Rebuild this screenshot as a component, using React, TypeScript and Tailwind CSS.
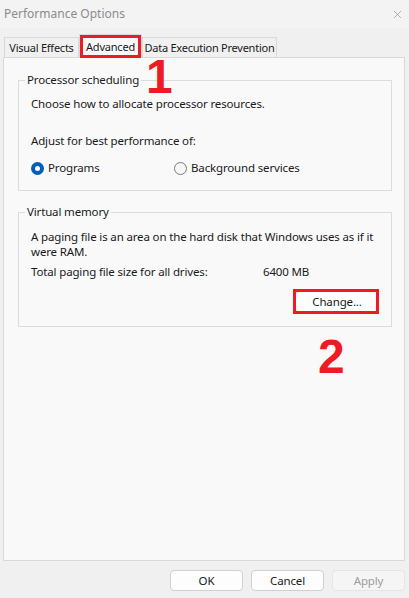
import { X } from 'lucide-react';

const font = { fontFamily: '"Noto Sans", "Open Sans", sans-serif' };

function Tab({ label, active, width }: { label: string; active?: boolean; width: string }) {
    if (active) {
        return (
            <div className={`relative -mb-px flex h-[24px] ${width} items-center justify-center whitespace-nowrap border border-b-0 border-[#d9d9d9] bg-[#f9f9f9] text-[11px] tracking-[-0.2px] text-[#1a1a1a]`}>
                {label}
                {/* marco rojo de la captura */}
                <span className="pointer-events-none absolute inset-0 border-[3px] border-[#ed1c24]" />
            </div>
        );
    }
    return (
        <div className={`flex h-[20px] ${width} items-center justify-center whitespace-nowrap border border-b-0 border-[#d9d9d9] bg-[#f0f0f0] text-[11px] tracking-[-0.25px] text-[#1a1a1a]`}>
            {label}
        </div>
    );
}

function Radio({ checked, label }: { checked?: boolean; label: string }) {
    return (
        <label className="flex items-center gap-[4px]">
            {checked ? (
                <span className="flex h-[13px] w-[13px] items-center justify-center rounded-full bg-[#005fb8]">
                    <span className="h-[5px] w-[5px] rounded-full bg-white" />
                </span>
            ) : (
                <span className="h-[13px] w-[13px] rounded-full border border-[#7a7a7a] bg-[#f7f7f7]" />
            )}
            <span>{label}</span>
        </label>
    );
}

function Group({ title, children, className }: { title: string; children: React.ReactNode; className?: string }) {
    return (
        <fieldset className={`ml-[14px] w-[374px] border border-[#dcdcdc] px-[12px] ${className ?? ''}`}>
            <legend className="-ml-[6px] px-[2px] leading-[16px] text-[#1a1a1a]">{title}</legend>
            {children}
        </fieldset>
    );
}

function DialogButton({ label, disabled }: { label: string; disabled?: boolean }) {
    return (
        <button
            type="button"
            disabled={disabled}
            className={
                disabled
                    ? 'h-[21px] w-[73px] rounded-[4px] border border-[#e5e5e5] bg-[#f5f5f5] text-[#9d9d9d]'
                    : 'h-[21px] w-[73px] rounded-[4px] border border-[#d0d0d0] bg-[#fdfdfd] text-[#1a1a1a]'
            }
        >
            {label}
        </button>
    );
}

export default function App() {
    return (
        <div
            className="relative flex h-[598px] w-[409px] flex-col overflow-hidden bg-[#f0f0f0] text-[11.5px] leading-[16px] tracking-[-0.15px] text-[#1a1a1a]"
            style={font}
        >
            {/* Barra de título */}
            <div className="flex h-[28px] shrink-0 items-center justify-between bg-[#f3f3f3] pl-[4px] pr-[5px]">
                <span className="text-[12px] tracking-normal text-[#8b8b8b]">Performance Options</span>
                <X className="h-[13px] w-[13px] text-[#8b8b8b]" strokeWidth={1.2} />
            </div>

            {/* Pestañas */}
            <div className="flex h-[29px] items-end pl-[4px]">
                <Tab label="Visual Effects" width="w-[75px]" />
                <Tab label="Advanced" width="w-[63px]" active />
                <Tab label="Data Execution Prevention" width="w-[135px]" />
            </div>

            {/* Panel */}
            <div className="ml-[3px] h-[504px] w-[402px] border border-[#d9d9d9] bg-[#f9f9f9]">
                <Group title="Processor scheduling" className="mt-[14px] pb-[14px]">
                    <p className="pt-[8px]">Choose how to allocate processor resources.</p>
                    <p className="mt-[21px]">Adjust for best performance of:</p>
                    <div className="mt-[11px] flex">
                        <div className="w-[143px]">
                            <Radio checked label="Programs" />
                        </div>
                        <Radio label="Background services" />
                    </div>
                </Group>

                <Group title="Virtual memory" className="mt-[13px] pb-[13px]">
                    <p className="pt-[9px] leading-[15px]">
                        A paging file is an area on the hard disk that Windows uses as if it
                        <br />
                        were RAM.
                    </p>
                    <div className="mt-[5px] flex">
                        <span className="w-[232px]">Total paging file size for all drives:</span>
                        <span>6400 MB</span>
                    </div>
                    <div className="mt-[11px] flex justify-end">
                        <div className="relative">
                            <button
                                type="button"
                                className="h-[22px] w-[84px] rounded-[4px] border border-[#d0d0d0] bg-[#fdfdfd]"
                            >
                                Change...
                            </button>
                            <span className="pointer-events-none absolute -left-[2px] -top-[2px] h-[25px] w-[86px] border-[3px] border-[#ed1c24]" />
                        </div>
                    </div>
                </Group>
            </div>

            {/* Botones */}
            <div className="mt-[9px] flex justify-end gap-[8px] pr-[4px]">
                <DialogButton label="OK" />
                <DialogButton label="Cancel" />
                <DialogButton label="Apply" disabled />
            </div>

            {/* Números de la anotación */}
            <span
                className="pointer-events-none absolute left-[146px] top-[60px] text-[48px] font-bold leading-[34px] tracking-normal text-[#ed1c24]"
                style={{ fontFamily: '"Liberation Sans", Arial, sans-serif' }}
            >
                1
            </span>
            <span
                className="pointer-events-none absolute left-[318px] top-[340px] text-[48px] font-bold leading-[34px] tracking-normal text-[#ed1c24]"
                style={{ fontFamily: '"Liberation Sans", Arial, sans-serif' }}
            >
                2
            </span>
        </div>
    );
}
